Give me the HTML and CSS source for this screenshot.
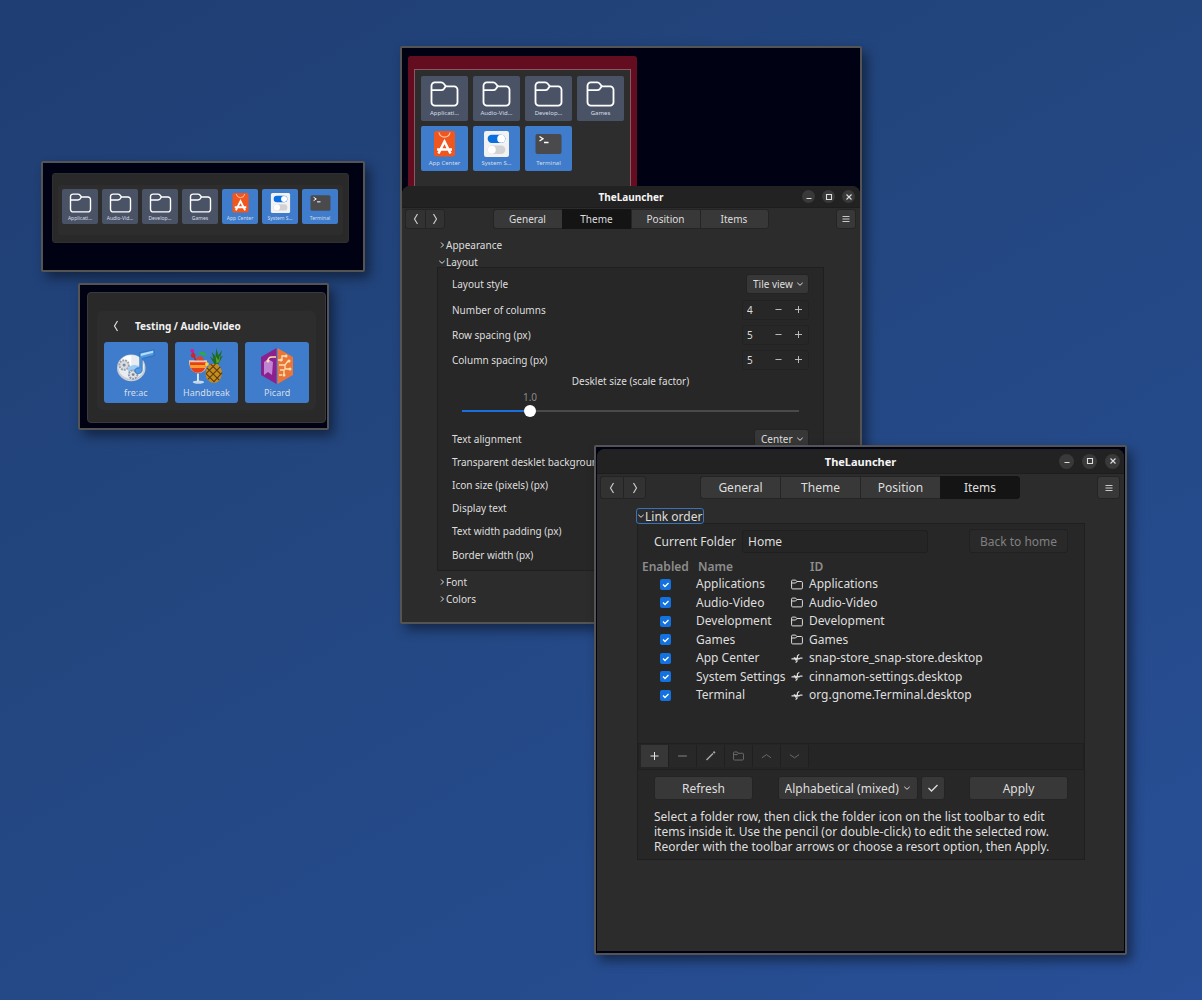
FILE: index.html
```html
<!DOCTYPE html>
<html lang="en">
<head>
<meta charset="utf-8">
<title>TheLauncher</title>
<meta name="viewport" content="width=device-width, initial-scale=1">
<link rel="stylesheet" href="styles.css">
</head>
<body>
<svg class="defs" aria-hidden="true">
  <symbol id="folder" viewBox="0 0 30 27"><path d="M1.500 8V5a3.500 3.500 0 0 1 3.500-3.500h6.500c1.500 0 2.200.6 3 1.600l1 1.300c.5.7 1 1.100 2 1.100H25A3.500 3.500 0 0 1 28.500 9v13a3.500 3.500 0 0 1-3.500 3.500H5A3.500 3.500 0 0 1 1.500 22V8zM2 9.500h9.500c1.500 0 2.300-.5 3-1.500l1.500-2.400" fill="none" stroke="currentColor" stroke-width="1.900" stroke-linejoin="round"/></symbol>
  <symbol id="folder-small" viewBox="0 0 12 10"><path d="M.6 8.400V1.600a1 1 0 0 1 1-1h3l1.200 1.400h4.600a1 1 0 0 1 1 1v5.400a1 1 0 0 1-1 1H1.600a1 1 0 0 1-1-1zM.8 3.500h3.800L6 2" fill="none" stroke="currentColor"/></symbol>
  <symbol id="store" viewBox="0 0 22 26"><rect x=".5" width="21" height="25.500" rx="2" fill="#f0561d"/><path d="M5.500 1.500a5.600 5.600 0 0 0 11 0" fill="none" stroke="#ffc4a8" stroke-width="1.300"/><path d="M5 22.500 11 10.500l6 12M3.500 18.500h15" fill="none" stroke="#fff" stroke-width="2.500"/></symbol>
  <symbol id="settings" viewBox="0 0 24 25"><rect width="24" height="25" rx="2" fill="#f2f2f2"/><rect x="3.500" y="3.500" width="17" height="8" rx="4" fill="#0a6fe0"/><circle cx="16.500" cy="7.500" r="3.800" fill="#fff"/><rect x="3.500" y="14" width="17" height="8" rx="4" fill="#d2d2d4"/><circle cx="7.500" cy="18" r="3.800" fill="#fff"/></symbol>
  <symbol id="terminal" viewBox="0 0 30 26"><rect x="2" y="3" width="26" height="20" rx="2" fill="#4a4a4c"/><path d="M6 5.500 9.500 7.700 6 10M10.500 11.500H15" fill="none" stroke="#fff" stroke-width="1.300"/></symbol>
  <symbol id="left" viewBox="0 0 6 12"><path d="M4.500 1 1.500 6l3 5" fill="none" stroke="currentColor" stroke-width="1.200"/></symbol>
  <symbol id="right" viewBox="0 0 6 12"><path d="m1.500 1 3 5-3 5" fill="none" stroke="currentColor" stroke-width="1.200"/></symbol>
  <symbol id="tri-right" viewBox="0 0 6 6"><path d="m2 .5 2.500 2.500L2 5.500" fill="none" stroke="currentColor"/></symbol>
  <symbol id="tri-down" viewBox="0 0 6 6"><path d="M.3 1.800 3 4.300l2.700-2.500" fill="none" stroke="currentColor"/></symbol>
  <symbol id="minus" viewBox="0 0 8 8"><path d="M.5 4h7" stroke="currentColor"/></symbol>
  <symbol id="plus" viewBox="0 0 8 8"><path d="M0 4h8M4 0v8" stroke="currentColor"/></symbol>
  <symbol id="menu" viewBox="0 0 8 8"><path d="M.5 1.500h7M.5 4h7M.5 6.500h7" stroke="currentColor"/></symbol>
  <symbol id="win-min" viewBox="0 0 8 8"><path d="M1.500 5.500h5" stroke="currentColor"/></symbol>
  <symbol id="win-max" viewBox="0 0 8 8"><path d="M1.500 1.500h5v5h-5z" fill="none" stroke="currentColor" stroke-width="1.100"/></symbol>
  <symbol id="win-close" viewBox="0 0 8 8"><path d="m1.500 1.500 5 5m0-5-5 5" stroke="currentColor" stroke-width="1.100"/></symbol>
  <symbol id="app" viewBox="0 0 12 12"><path d="M0 6.500h4.500l1.500-1 2 1 1.500-1H12M8.500 1.500 6.500 3v2.500M6 6.500V9L4.500 10.500M2.500 5l3 1.500L4 8" fill="none" stroke="currentColor" stroke-width="1.300"/></symbol>
  <symbol id="freac" viewBox="0 0 40 36"><ellipse cx="15" cy="20" rx="15" ry="14" fill="#c9ced6"/><ellipse cx="15" cy="19" rx="13.500" ry="12.500" fill="#e9edf1"/><path d="m15 19-11-7q5-6 11-5z" fill="#fff"/><circle cx="7.500" cy="17" r="5" fill="#d9dce0" stroke="#98a0ac" stroke-width="2" stroke-dasharray="2 1"/><circle cx="7.500" cy="17" r="1.600" fill="#7f8998"/><path d="M11 21q2-4 8-4l5 1-2 6-9 2z" fill="#9ccbf3"/><circle cx="17" cy="27" r="4.500" fill="#dfe2e6" stroke="#8f9aaa" stroke-width="2" stroke-dasharray="2 1"/><circle cx="17" cy="27" r="1.500" fill="#74859b"/><path d="M24 4 39 1v6l-12.500 3v12q0 4-4.500 4-4 0-3-4 1-3 5-2z" fill="#4f9ae2" stroke="#2a67b2" stroke-width=".8"/><path d="m25 5 13-3v2L25 7.500z" fill="#b7dcfb"/></symbol>
  <symbol id="handbreak" viewBox="0 0 38 38"><path d="M31 17q6 5 4.500 12-2 8-8 8-8-1-9-9 0-8 6-11z" fill="#c38d22"/><path d="m20 21 13 13M19 27l9 9M24 17l11 11M34 20 21 33M36 26l-9 10M29 17l-10 10" stroke="#5e3a08" stroke-width="1.100"/><path d="m28 17-5-8 4 3-2-8 4 5 1-9 2 8 4-6-2 8 3-2-5 9z" fill="#1f6b22"/><path d="m30 16-1-8 3 5 2-6-1 8z" fill="#54a430"/><ellipse cx="11" cy="36" rx="6" ry="1.800" fill="#c5d9ea"/><path d="M10.500 27v8" stroke="#d9e9f5" stroke-width="2"/><path d="M1 13h19q1 9-4 12-5 3-10 0-5-3-5-12z" fill="#efc3a8"/><path d="M2 15h17q0 8-4 10-5 2-9 0-4-3-4-10z" fill="#e2401a"/><path d="M2 18h17l-1 3H3z" fill="#ff9a2c"/><path d="m8 13 2-4h5l2 4z" fill="#d8432e"/><path d="M4 2 8 13" stroke="#9e264f" stroke-width="1.500"/><circle cx="4.500" cy="3" r="2" fill="#d71a9a"/><circle cx="5.500" cy="8" r="2.500" fill="#cf2525"/><path d="M11 5q5-3 9 2-5 2-9-2z" fill="#27b035"/><circle cx="20" cy="17" r="2" fill="#fdcf45"/></symbol>
  <symbol id="picard" viewBox="0 0 34 36"><path d="M16.500 0v36L1 27V9z" fill="#8a218f"/><path d="M17.500 0v36L33 27V9z" fill="#ea753b"/><path d="m4 14 4-3 5 3-1 13-4-3-4 3z" fill="#c184d4"/><path d="M8 13q0-4 4-4h4M18 12h4V8h3M19 17h6l3-4M20 22h4v4M25 17v4h4M19 27h3" fill="none" stroke="#ffe0aa" stroke-width="1.300"/><g fill="#ffe0aa"><circle cx="8" cy="13" r="1.500"/><circle cx="26" cy="8" r="1.500"/><circle cx="29" cy="13" r="1.500"/><circle cx="30" cy="21" r="1.500"/><circle cx="24" cy="27" r="1.500"/><circle cx="21" cy="12" r="1.500"/></g></symbol>
</svg>

<main class="desktop">
  <section class="shot strip-shot" aria-label="Launcher strip">
    <div class="desklet strip">
      <div class="strip-tiles">
        <button class="tile mini folder"><svg><use href="#folder"/></svg><span>Applicati…</span></button>
        <button class="tile mini folder"><svg><use href="#folder"/></svg><span>Audio-Vid…</span></button>
        <button class="tile mini folder"><svg><use href="#folder"/></svg><span>Develop…</span></button>
        <button class="tile mini folder"><svg><use href="#folder"/></svg><span>Games</span></button>
        <button class="tile mini"><svg><use href="#store"/></svg><span>App Center</span></button>
        <button class="tile mini"><svg><use href="#settings"/></svg><span>System S…</span></button>
        <button class="tile mini"><svg><use href="#terminal"/></svg><span>Terminal</span></button>
      </div>
    </div>
  </section>

  <section class="shot group-shot" aria-label="Audio-Video folder">
    <div class="desklet group">
      <div class="group-body">
        <header class="group-head"><button class="plain" aria-label="Back"><svg class="arrow"><use href="#left"/></svg></button><h2>Testing / Audio-Video</h2></header>
        <div class="group-tiles">
          <button class="tile big"><svg><use href="#freac"/></svg><span>fre:ac</span></button>
          <button class="tile big"><svg><use href="#handbreak"/></svg><span>Handbreak</span></button>
          <button class="tile big"><svg><use href="#picard"/></svg><span>Picard</span></button>
        </div>
      </div>
    </div>
  </section>

  <section class="shot theme-shot" aria-label="Theme settings">
    <div class="red-desklet">
      <div class="red-body">
        <button class="tile mid folder"><svg><use href="#folder"/></svg><span>Applicati…</span></button>
        <button class="tile mid folder"><svg><use href="#folder"/></svg><span>Audio-Vid…</span></button>
        <button class="tile mid folder"><svg><use href="#folder"/></svg><span>Develop…</span></button>
        <button class="tile mid folder"><svg><use href="#folder"/></svg><span>Games</span></button>
        <button class="tile mid"><svg><use href="#store"/></svg><span>App Center</span></button>
        <button class="tile mid"><svg><use href="#settings"/></svg><span>System S…</span></button>
        <button class="tile mid"><svg><use href="#terminal"/></svg><span>Terminal</span></button>
      </div>
    </div>
    <div class="gtk theme">
      <header class="titlebar"><h1>TheLauncher</h1>
        <div class="controls"><button aria-label="Minimize"><svg><use href="#win-min"/></svg></button><button aria-label="Maximize"><svg><use href="#win-max"/></svg></button><button aria-label="Close"><svg><use href="#win-close"/></svg></button></div>
      </header>
      <nav class="tabbar">
        <div class="joined history"><button aria-label="Previous"><svg class="arrow"><use href="#left"/></svg></button><button aria-label="Next"><svg class="arrow"><use href="#right"/></svg></button></div>
        <div class="joined tabs"><button>General</button><button class="active">Theme</button><button>Position</button><button>Items</button></div>
        <button class="btn menu" aria-label="Menu"><svg><use href="#menu"/></svg></button>
      </nav>
      <div class="content">
        <button class="expander"><svg><use href="#tri-right"/></svg>Appearance</button>
        <button class="expander"><svg><use href="#tri-down"/></svg>Layout</button>
        <div class="frame settings">
          <div class="row combo-row"><label for="style">Layout style</label><span class="combo"><select id="style"><option>Tile view</option></select><svg><use href="#tri-down"/></svg></span></div>
          <div class="row spin-row"><label for="cols">Number of columns</label><span class="spin"><input id="cols" value="4"><button aria-label="Decrease"><svg><use href="#minus"/></svg></button><button aria-label="Increase"><svg><use href="#plus"/></svg></button></span></div>
          <div class="row spin-row"><label for="rowsp">Row spacing (px)</label><span class="spin"><input id="rowsp" value="5"><button aria-label="Decrease"><svg><use href="#minus"/></svg></button><button aria-label="Increase"><svg><use href="#plus"/></svg></button></span></div>
          <div class="row spin-row"><label for="colsp">Column spacing (px)</label><span class="spin"><input id="colsp" value="5"><button aria-label="Decrease"><svg><use href="#minus"/></svg></button><button aria-label="Increase"><svg><use href="#plus"/></svg></button></span></div>
          <div class="scale"><label for="scale">Desklet size (scale factor)</label><output for="scale">1.0</output><input id="scale" type="range" min="0" max="100" value="19"></div>
          <div class="row"><label for="align">Text alignment</label><span class="combo"><select id="align"><option>Center</option></select><svg><use href="#tri-down"/></svg></span></div>
          <div class="row">Transparent desklet background</div>
          <div class="row">Icon size (pixels) (px)</div>
          <div class="row">Display text</div>
          <div class="row">Text width padding (px)</div>
          <div class="row combo-row">Border width (px)</div>
        </div>
        <button class="expander"><svg><use href="#tri-right"/></svg>Font</button>
        <button class="expander"><svg><use href="#tri-right"/></svg>Colors</button>
      </div>
    </div>
  </section>

  <section class="shot items-shot" aria-label="Items settings">
    <div class="gtk items">
      <header class="titlebar"><h1>TheLauncher</h1>
        <div class="controls"><button aria-label="Minimize"><svg><use href="#win-min"/></svg></button><button aria-label="Maximize"><svg><use href="#win-max"/></svg></button><button aria-label="Close"><svg><use href="#win-close"/></svg></button></div>
      </header>
      <nav class="tabbar">
        <div class="joined history"><button aria-label="Previous"><svg class="arrow"><use href="#left"/></svg></button><button aria-label="Next"><svg class="arrow"><use href="#right"/></svg></button></div>
        <div class="joined tabs"><button>General</button><button>Theme</button><button>Position</button><button class="active">Items</button></div>
        <button class="btn menu" aria-label="Menu"><svg><use href="#menu"/></svg></button>
      </nav>
      <div class="content">
        <button class="expander focused"><svg><use href="#tri-down"/></svg>Link order</button>
        <div class="frame links">
          <div class="folder-row"><label for="current">Current Folder</label><input id="current" value="Home"><button class="btn wide" disabled>Back to home</button></div>
          <div class="list">
            <table>
              <colgroup><col class="c-check"><col class="c-name"><col></colgroup>
              <thead><tr><th>Enabled</th><th>Name</th><th class="id">ID</th></tr></thead>
              <tbody>
                <tr><td><input type="checkbox" checked aria-label="Enable Applications"></td><td>Applications</td><td class="id"><svg><use href="#folder-small"/></svg>Applications</td></tr>
                <tr><td><input type="checkbox" checked aria-label="Enable Audio-Video"></td><td>Audio-Video</td><td class="id"><svg><use href="#folder-small"/></svg>Audio-Video</td></tr>
                <tr><td><input type="checkbox" checked aria-label="Enable Development"></td><td>Development</td><td class="id"><svg><use href="#folder-small"/></svg>Development</td></tr>
                <tr><td><input type="checkbox" checked aria-label="Enable Games"></td><td>Games</td><td class="id"><svg><use href="#folder-small"/></svg>Games</td></tr>
                <tr><td><input type="checkbox" checked aria-label="Enable App Center"></td><td>App Center</td><td class="id"><svg><use href="#app"/></svg>snap-store_snap-store.desktop</td></tr>
                <tr><td><input type="checkbox" checked aria-label="Enable System Settings"></td><td>System Settings</td><td class="id"><svg><use href="#app"/></svg>cinnamon-settings.desktop</td></tr>
                <tr><td><input type="checkbox" checked aria-label="Enable Terminal"></td><td>Terminal</td><td class="id"><svg><use href="#app"/></svg>org.gnome.Terminal.desktop</td></tr>
              </tbody>
            </table>
          </div>
          <div class="toolbar">
            <button class="on" aria-label="Add"><svg><use href="#plus"/></svg></button>
            <button aria-label="Remove"><svg><use href="#minus"/></svg></button>
            <button class="mid-on" aria-label="Edit"><svg viewBox="0 0 10 10"><path d="m1 9 6.500-6.500" stroke="currentColor" stroke-width="1.600"/><path d="M8 2 9.300.7" stroke="currentColor" stroke-width="2"/></svg></button>
            <button aria-label="Open folder"><svg><use href="#folder-small"/></svg></button>
            <button aria-label="Move up"><svg viewBox="0 0 12 8"><path d="m1 6 5-3.500L11 6" fill="none" stroke="currentColor"/></svg></button>
            <button aria-label="Move down"><svg viewBox="0 0 12 8"><path d="m1 2.500 5 3.500 5-3.500" fill="none" stroke="currentColor"/></svg></button>
          </div>
          <div class="actions">
            <button class="btn wide">Refresh</button>
            <div class="sort"><span class="combo"><select aria-label="Sort order"><option>Alphabetical (mixed)</option></select><svg><use href="#tri-down"/></svg></span><button class="btn check" aria-label="Use sort order"><svg viewBox="0 0 12 10"><path d="m1.500 5 3 3 6-6" fill="none" stroke="currentColor" stroke-width="1.300"/></svg></button></div>
            <button class="btn wide">Apply</button>
          </div>
          <p>Select a folder row, then click the folder icon on the list toolbar to edit<br>items inside it. Use the pencil (or double-click) to edit the selected row.<br>Reorder with the toolbar arrows or choose a resort option, then Apply.</p>
        </div>
      </div>
    </div>
  </section>
</main>
</body>
</html>
```

FILE: styles.css
```css
* { box-sizing: border-box; }
body { margin: 0; font-family: "Noto Sans", "Open Sans", sans-serif; font-size: 11px; color: #dedede; }
button, input, select, output { font: inherit; color: inherit; }
button { margin: 0; padding: 0; border: 0; background: none; }
h1, h2, p { margin: 0; }
svg { display: block; flex: none; }
.defs { position: absolute; width: 0; height: 0; }

.desktop { position: relative; min-height: 100vh; overflow: hidden; background: linear-gradient(150deg, #1f3e73 0%, #23467f 40%, #284f97 100%); }
.shot { position: absolute; border: 2px solid #545454; border-radius: 2px; background: #010114; box-shadow: 5px 6px 12px rgba(0, 0, 0, .45); }
.strip-shot { left: 41px; top: 161px; width: 324px; padding: 10px 14px 27px 9px; }
.group-shot { left: 78px; top: 283px; width: 251px; padding: 7px 1px 5px 7px; }
.theme-shot { left: 400px; top: 46px; width: 462px; padding-top: 8px; }
.items-shot { left: 594px; top: 445px; width: 533px; padding: 2px 1px 2px 1px; }

/* Desklets */
.desklet { background: #292929; border: 1px solid #2f2f2f; border-radius: 3px; }
.strip { padding: 11px 5px 7px; }
.strip-tiles { display: flex; gap: 4px; padding: 4px 5px 4px 4px; height: 50px; background: #2d2d2d; border-radius: 3px; }
.tile { display: flex; flex-direction: column; align-items: center; justify-content: space-between; background: #3f7ccb; border-radius: 2px; color: #d6dee8; white-space: nowrap; overflow: hidden; }
.tile.folder { background: #4a5365; }
.tile.folder svg { color: #fff; }
.mini { flex: 1; height: 35px; padding: 4px 0 1px; font-size: 5px; line-height: 9px; }
.mini svg { width: 23px; height: 20px; }
.group { padding: 18px 9px 12px; border-color: #3a3a3a; border-radius: 4px; }
.group-body { padding: 7px; background: #2d2d2d; border-radius: 6px; }
.group-head { display: flex; align-items: center; gap: 16px; height: 16px; margin-bottom: 8px; padding-left: 9px; }
.group-head h2 { font-size: 10px; font-weight: 700; color: #f1f1f1; }
.arrow { width: 6px; height: 12px; }
.group-tiles { display: grid; grid-template-columns: repeat(3, 1fr); gap: 7px; }
.big { height: 61px; padding: 6px 0 3px; border-radius: 3px; font-size: 9px; line-height: 14px; }
.big svg { width: 38px; height: 36px; }
.red-desklet { width: 229px; height: 130px; margin-left: 6px; padding: 13px 6px 0; background: #650d20; border-radius: 3px 3px 0 0; }
.red-body { display: grid; grid-template-columns: repeat(4, 47px); grid-auto-rows: 45px; gap: 5px; height: 117px; padding: 6px 6px 0; background: #2d2d2d; border: 1px solid #8b5762; border-bottom: 0; }
.mid { padding: 5px 0 2px; font-size: 6px; line-height: 11px; }
.mid svg { width: 31px; height: 26px; }

/* Application windows */
.gtk { background: #2c2c2c; border-radius: 8px 8px 0 0; overflow: hidden; }
.titlebar { display: grid; grid-template-columns: 1fr auto 1fr; align-items: center; height: 22px; background: #222; border-bottom: 1px solid #1d1d1d; }
.titlebar h1 { grid-column: 2; font-size: 10px; font-weight: 700; color: #f5f5f5; }
.controls { display: flex; justify-content: flex-end; gap: 7px; padding-right: 5px; }
.controls button { display: grid; place-items: center; width: 13px; height: 13px; border-radius: 50%; background: #393939; }
.controls svg, .menu svg { width: 8px; height: 8px; }
.tabbar { display: grid; grid-template-columns: 1fr auto 1fr; align-items: center; padding: 1px 4px 0 3px; }
.btn, .joined button { display: grid; place-items: center; background: #383838; border: 1px solid #242424; border-radius: 3px; }
.joined { display: flex; }
.joined button { border-radius: 0; border-right-width: 0; }
.joined button:first-child { border-radius: 3px 0 0 3px; }
.joined button:last-child { border-radius: 0 3px 3px 0; border-right-width: 1px; }
.joined .active { background: #141414; border-color: #141414; }
.history button { background: #323232; color: #ccc; }
.menu { justify-self: end; color: #c8c8c8; }
.expander { display: flex; align-items: center; gap: 1px; height: 17px; color: #dedede; }
.expander svg { width: 6px; height: 6px; }
.frame { background: #272727; border: 1px solid #1f1f1f; }

.combo { display: grid; grid-template-columns: auto auto; align-items: center; gap: 3px; padding: 0 6px; height: 20px; background: #373737; border: 1px solid #232323; border-radius: 3px; }
.combo select { appearance: none; border: 0; padding: 0; background: none; }
.combo svg { width: 6px; height: 6px; }

.theme { font-size: 10px; min-height: 436px; }
.theme .tabs button { width: 69px; height: 20px; }
.theme .history button { width: 20px; height: 20px; }
.theme .menu { width: 20px; height: 20px; }
.theme .content { padding: 7px 36px 0 35px; }
.theme .expander { margin-left: 2px; }
.theme .frame + .expander { margin-top: 2px; }
.settings { margin-top: -3px; padding: 3px 14px 2px; }
.row { display: flex; align-items: center; justify-content: space-between; height: 23px; }
.combo-row { height: 26px; }
.spin-row { height: 25px; }
.spin { display: flex; align-items: center; height: 20px; border: 1px solid #222; border-radius: 3px; }
.spin input { width: 25px; padding: 0 4px; border: 0; background: none; }
.spin button { display: grid; place-items: center; width: 20px; height: 18px; color: #ccc; }
.spin svg { width: 7px; height: 7px; }
.scale { display: grid; padding: 0 10px 8px; height: 55px; align-content: start; }
.scale label { line-height: 18px; text-align: center; }
.scale output { width: 26px; margin-left: 55px; line-height: 14px; text-align: center; color: #8a8a8a; }
.scale input { appearance: none; width: 100%; height: 14px; margin: 0; background: linear-gradient(90deg, #1a6fdc 19%, #4a4a4a 19%) center / 100% 2px no-repeat; }
.scale input::-webkit-slider-thumb { appearance: none; width: 12px; height: 12px; border-radius: 50%; background: #fff; }
.theme .combo { padding: 0 5px 0 6px; gap: 4px; }

.items { min-height: 502px; font-size: 12px; }
.items .titlebar { height: 25px; }
.items .titlebar h1 { font-size: 11px; }
.items .controls { gap: 8px; padding-right: 4px; }
.items .controls button { width: 15px; height: 15px; }
.items .tabbar { padding-top: 2px; }
.items .tabs button { width: 80px; height: 23px; }
.items .history button { width: 23px; height: 23px; }
.items .menu { width: 23px; height: 23px; }
.items .content { padding: 10px 39px 0 40px; }
.focused { height: 14px; padding: 0 1px; outline: 1px solid #3574bd; border-radius: 2px; }
.links { padding: 5px 0; }
.folder-row { display: flex; align-items: center; padding: 0 16px; gap: 6px; height: 24px; }
.folder-row input { width: 186px; height: 23px; padding: 0 5px; border: 1px solid #1f1f1f; border-radius: 3px; background: #252525; }
.folder-row .wide { margin-left: auto; background: #292929; border-color: #212121; color: #808080; }
.wide { width: 99px; height: 24px; }
.list { min-height: 190px; padding-top: 5px; }
table { width: 100%; table-layout: fixed; border-collapse: collapse; }
.c-check { width: 56px; }
.c-name { width: 95px; }
th, td { padding: 0 0 0 2px; text-align: left; white-space: nowrap; line-height: 16px; }
th { height: 17px; padding-left: 4px; color: #8d8d8d; font-weight: 600; }
td { height: 18px; }
tr:nth-child(even) td { height: 19px; }
th.id { padding-left: 21px; }
td.id { display: flex; align-items: center; gap: 6px; }
td.id svg { width: 12px; height: 11px; }
td input { appearance: none; display: block; width: 11px; height: 11px; margin: 0 0 0 20px; border-radius: 2px; background: #1371e0 url("data:image/svg+xml,%3Csvg xmlns='http://www.w3.org/2000/svg' viewBox='0 0 11 11'%3E%3Cpath d='m3 5.500 2 2 3.500-3.500' fill='none' stroke='%23fff' stroke-width='1.300'/%3E%3C/svg%3E"); }
.toolbar { display: flex; height: 27px; padding: 1px 2px; background: #252525; border: 1px solid #202020; }
.toolbar button { display: grid; place-items: center; width: 28px; height: 22px; border-right: 1px solid #1f1f1f; background: #282828; color: #707070; }
.toolbar .on { background: #373737; color: #e5e5e5; }
.toolbar .mid-on { color: #a5a5a5; }
.toolbar svg { width: 11px; height: 10px; }
.toolbar .on svg { height: 8px; }
.actions { display: flex; justify-content: space-between; padding: 6px 16px 9px; }
.sort { display: flex; gap: 3px; }
.items .combo { height: 24px; padding: 0 7px 0 6px; gap: 4px; }
.check { width: 24px; height: 24px; }
.check svg { width: 12px; height: 10px; }
.links p { padding: 0 16px; line-height: 15px; white-space: nowrap; }
```
